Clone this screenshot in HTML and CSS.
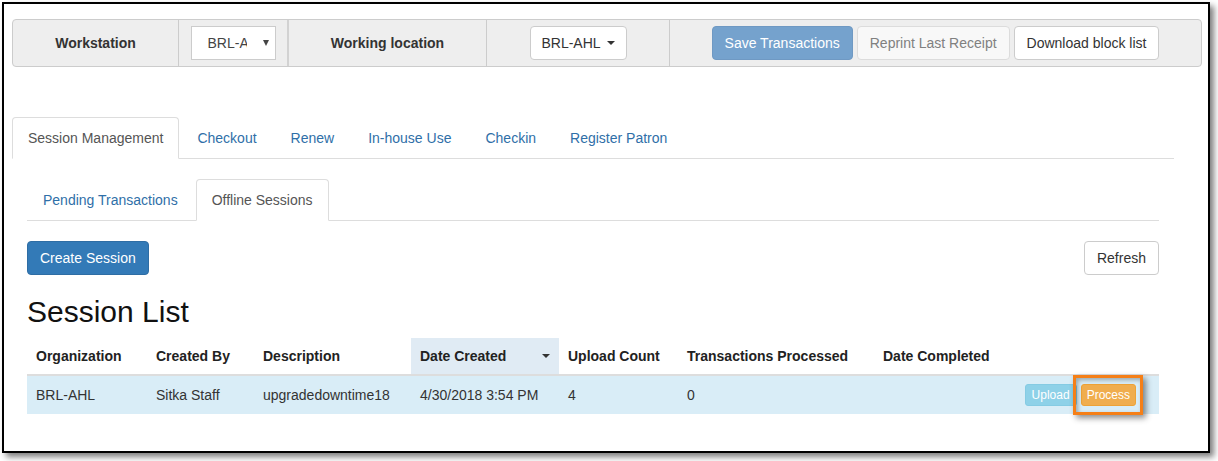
FILE: index.html
```html
<!DOCTYPE html>
<html>
<head>
<meta charset="utf-8">
<link rel="stylesheet" href="styles.css">
</head>
<body>
<div class="frame">
  <div class="navbar">
    <div class="cell cell-ws"><span class="label">Workstation</span></div>
    <div class="cell cell-sel">
      <div class="select"><span class="select-text">BRL-AHL</span><span class="select-caret"></span></div>
    </div>
    <div class="cell cell-wl"><span class="label">Working location</span></div>
    <div class="cell cell-dd">
      <div class="btn btn-default">BRL-AHL <span class="caret"></span></div>
    </div>
    <div class="cell cell-btns">
      <div class="btn btn-primary disabled">Save Transactions</div>
      <div class="btn btn-default disabled">Reprint Last Receipt</div>
      <div class="btn btn-default">Download block list</div>
    </div>
  </div>

  <ul class="tabs main-tabs">
    <li class="active"><a>Session Management</a></li>
    <li><a>Checkout</a></li>
    <li><a>Renew</a></li>
    <li><a>In-house Use</a></li>
    <li><a>Checkin</a></li>
    <li><a>Register Patron</a></li>
  </ul>

  <div class="pane">
    <ul class="tabs sub-tabs">
      <li><a>Pending Transactions</a></li>
      <li class="active"><a>Offline Sessions</a></li>
    </ul>

    <div class="toolbar">
      <div class="btn btn-primary">Create Session</div>
      <div class="btn btn-default">Refresh</div>
    </div>

    <h2 class="heading">Session List</h2>

    <table class="table">
      <colgroup>
        <col class="c-org"><col class="c-by"><col class="c-desc"><col class="c-date"><col class="c-up"><col class="c-tp"><col class="c-dc"><col>
      </colgroup>
      <thead>
        <tr>
          <th>Organization</th>
          <th>Created By</th>
          <th>Description</th>
          <th class="sorted">Date Created<span class="sort-caret"></span></th>
          <th>Upload Count</th>
          <th>Transactions Processed</th>
          <th>Date Completed</th>
          <th></th>
        </tr>
      </thead>
      <tbody>
        <tr class="info">
          <td>BRL-AHL</td>
          <td>Sitka Staff</td>
          <td>upgradedowntime18</td>
          <td>4/30/2018 3:54 PM</td>
          <td>4</td>
          <td>0</td>
          <td></td>
          <td class="actions"><span class="btn-xs btn-info">Upload</span><span class="hl-wrap"><span class="btn-xs btn-warning">Process</span><span class="highlight"></span></span></td>
        </tr>
      </tbody>
    </table>
  </div>
</div>
</body>
</html>
```

FILE: styles.css
```css
* { box-sizing: border-box; }
html, body { margin: 0; padding: 0; background: #fff; }
body {
  font-family: "Liberation Sans", Arial, sans-serif;
  font-size: 14px;
  line-height: 20px;
  color: #333;
  width: 1218px;
  height: 461px;
  overflow: hidden;
}
.frame {
  margin: 2px 0 0 2px;
  width: 1208px;
  height: 451px;
  border: 2px solid #000;
  padding: 15px 0 0 8px;
  box-shadow: 4px 4px 6px rgba(0,0,0,0.5);
  background: #fff;
}
.navbar {
  display: flex;
  width: 1190px;
  height: 48px;
  background: #eee;
  border: 1px solid #ccc;
  border-radius: 4px;
}
.cell {
  display: flex;
  align-items: center;
  justify-content: center;
  border-right: 1px solid #ccc;
}
.cell-ws { width: 166px; }
.cell-sel { width: 110px; border-right: 2px solid #d2d2d2; }
.cell-wl { width: 198px; }
.cell-dd { width: 183px; }
.cell-btns { flex: 1; border-right: none; gap: 4px; }
.label { font-weight: bold; color: #333; }
.select {
  width: 85px;
  height: 34px;
  background: #fff;
  border: 1px solid #ccc;
  display: flex;
  align-items: center;
  padding-left: 16px;
  position: relative;
}
.select-text {
  display: inline-block;
  width: 39px;
  overflow: hidden;
  white-space: nowrap;
  color: #444;
}
.select-caret {
  margin-left: 16px;
  width: 0; height: 0;
  border-left: 3.5px solid transparent;
  border-right: 3.5px solid transparent;
  border-top: 6px solid #444;
}
.btn {
  display: inline-flex;
  align-items: center;
  height: 34px;
  padding: 0 12px;
  border: 1px solid #ccc;
  border-radius: 4px;
  background: #fff;
  color: #333;
  white-space: nowrap;
}
.btn-primary { background: #337ab7; border-color: #2e6da4; color: #fff; }
.btn-primary.disabled { background: #75a2cd; border-color: #6f99c3; }
.btn-default.disabled { background: #f8f8f8; border-color: #dcdcdc; color: #808080; }
.cell-dd .btn { width: 97px; justify-content: center; }
.caret {
  display: inline-block;
  margin-left: 6px;
  width: 0; height: 0;
  border-left: 4px solid transparent;
  border-right: 4px solid transparent;
  border-top: 4px solid #333;
}

.tabs {
  list-style: none;
  margin: 0;
  padding: 0;
  display: flex;
  border-bottom: 1px solid #ddd;
}
.tabs li { margin-right: 2px; margin-bottom: -1px; }
.tabs a {
  display: block;
  padding: 10px 15px;
  line-height: 20px;
  border: 1px solid transparent;
  border-radius: 4px 4px 0 0;
  color: #2f6fa8;
}
.tabs li.active a {
  color: #555;
  background: #fff;
  border-color: #ddd #ddd transparent #ddd;
}
.main-tabs { margin-top: 50px; width: 1162px; }
.pane { width: 1162px; padding: 20px 15px 0 15px; }
.toolbar {
  display: flex;
  justify-content: space-between;
  margin-top: 20px;
}
.heading {
  margin: 20px 0 10px 0;
  font-size: 30px;
  line-height: 33px;
  font-weight: normal;
  color: #111;
}
.table {
  width: 1132px;
  border-collapse: collapse;
  table-layout: fixed;
}
.c-org { width: 120px; }
.c-by { width: 107px; }
.c-desc { width: 157px; }
.c-date { width: 148px; }
.c-up { width: 119px; }
.c-tp { width: 196px; }
.c-dc { width: 136px; }
.table th, .table td {
  padding: 8px 8px 8px 9px;
  text-align: left;
  line-height: 20px;
  white-space: nowrap;
}
.table th {
  font-weight: bold;
  border-bottom: 2px solid #ddd;
  color: #222;
}
.table th.sorted { background: #e0ebf4; position: relative; }
.sort-caret {
  position: absolute;
  right: 9px;
  top: 16px;
  width: 0; height: 0;
  border-left: 4px solid transparent;
  border-right: 4px solid transparent;
  border-top: 4px solid #333;
}
.table td { border-top: 1px solid #ddd; }
tr.info td { background: #d9edf7; }
.table td.actions { text-align: right; padding-right: 23px; }
.btn-xs {
  display: inline-block;
  font-size: 12px;
  line-height: 18px;
  padding: 1px 5px;
  border-radius: 3px;
  color: #fff;
  vertical-align: middle;
}
.btn-info { background: #8ed1e8; border: 1px solid #85cbe3; padding: 1px 6px; }
.hl-wrap { position: relative; display: inline-block; margin-left: 4px; vertical-align: middle; }
.btn-warning { background: #f0ad4e; border: 1px solid #eea236; }
.highlight {
  position: absolute;
  left: -8px;
  top: -9px;
  width: 70px;
  height: 40px;
  border: 3px solid #f57f17;
  box-shadow: 3px 3px 6px rgba(0,0,0,0.45), inset 2px 2px 4px rgba(0,0,0,0.3);
}
```
